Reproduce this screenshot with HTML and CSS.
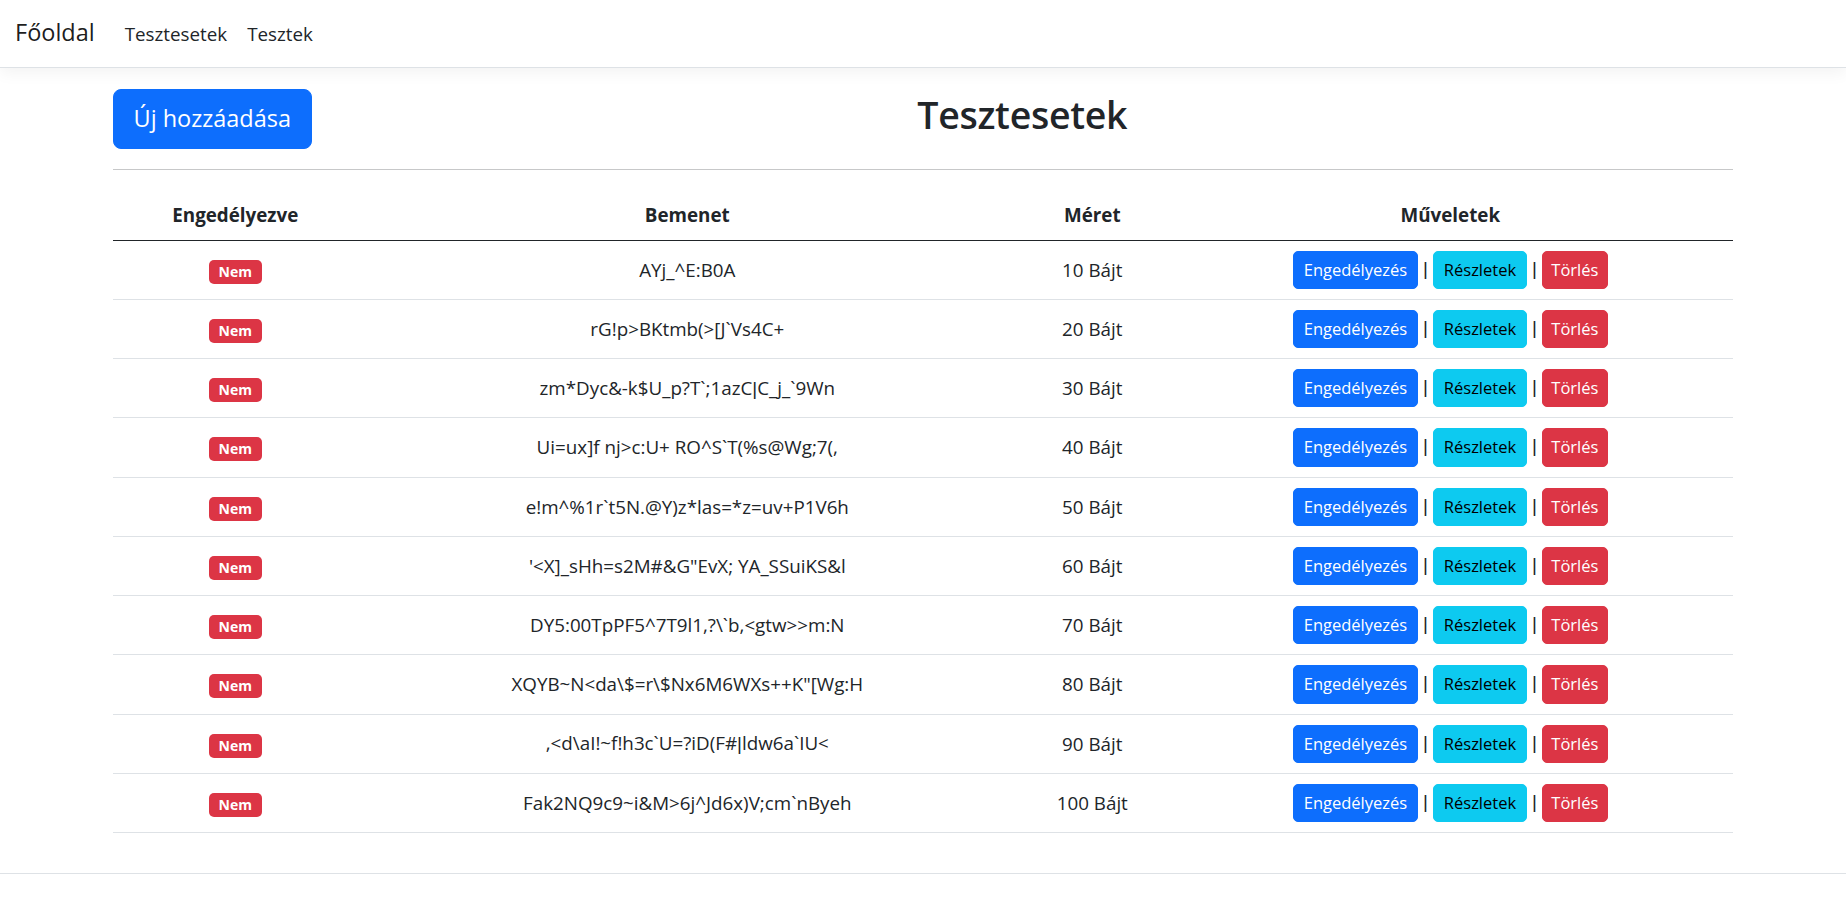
FILE: index.html
```html
<!DOCTYPE html>
<html lang="hu">
<head>
<meta charset="utf-8">
<title>Tesztesetek</title>
<link rel="stylesheet" href="styles.css">
</head>
<body>
<header class="navbar">
  <a class="brand" href="#">Főoldal</a>
  <nav class="nav">
    <a class="nav-link" href="#">Tesztesetek</a>
    <a class="nav-link" href="#">Tesztek</a>
  </nav>
</header>
<main class="container">
  <div class="title-row">
    <a class="btn btn-lg btn-primary" href="#">Új hozzáadása</a>
    <h1 class="title">Tesztesetek</h1>
  </div>
  <hr class="divider">
  <table class="table">
    <colgroup>
      <col class="c1"><col class="c2"><col class="c3"><col class="c4">
    </colgroup>
    <thead>
      <tr><th>Engedélyezve</th><th>Bemenet</th><th>Méret</th><th>Műveletek</th></tr>
    </thead>
    <tbody>
      <tr><td><span class="badge">Nem</span></td><td>AYj_^E:B0A</td><td>10 Bájt</td><td><a class="btn btn-sm btn-primary" href="#">Engedélyezés</a> <span class="sep">|</span> <a class="btn btn-sm btn-info" href="#">Részletek</a> <span class="sep">|</span> <a class="btn btn-sm btn-danger" href="#">Törlés</a></td></tr>
      <tr><td><span class="badge">Nem</span></td><td>rG!p&gt;BKtmb(&gt;[J`Vs4C+</td><td>20 Bájt</td><td><a class="btn btn-sm btn-primary" href="#">Engedélyezés</a> <span class="sep">|</span> <a class="btn btn-sm btn-info" href="#">Részletek</a> <span class="sep">|</span> <a class="btn btn-sm btn-danger" href="#">Törlés</a></td></tr>
      <tr><td><span class="badge">Nem</span></td><td>zm*Dyc&amp;-k$U_p?T`;1azC<span class="bar">|</span>C_j_`9Wn</td><td>30 Bájt</td><td><a class="btn btn-sm btn-primary" href="#">Engedélyezés</a> <span class="sep">|</span> <a class="btn btn-sm btn-info" href="#">Részletek</a> <span class="sep">|</span> <a class="btn btn-sm btn-danger" href="#">Törlés</a></td></tr>
      <tr><td><span class="badge">Nem</span></td><td>Ui=ux]f nj&gt;c:U+ RO^S`T(%s@Wg;7(,</td><td>40 Bájt</td><td><a class="btn btn-sm btn-primary" href="#">Engedélyezés</a> <span class="sep">|</span> <a class="btn btn-sm btn-info" href="#">Részletek</a> <span class="sep">|</span> <a class="btn btn-sm btn-danger" href="#">Törlés</a></td></tr>
      <tr><td><span class="badge">Nem</span></td><td>e!m^%1r`t5N.@Y)z*las=*z=uv+P1V6h</td><td>50 Bájt</td><td><a class="btn btn-sm btn-primary" href="#">Engedélyezés</a> <span class="sep">|</span> <a class="btn btn-sm btn-info" href="#">Részletek</a> <span class="sep">|</span> <a class="btn btn-sm btn-danger" href="#">Törlés</a></td></tr>
      <tr><td><span class="badge">Nem</span></td><td>'&lt;X]_sHh=s2M#&amp;G"EvX; YA_SSuiKS&amp;l</td><td>60 Bájt</td><td><a class="btn btn-sm btn-primary" href="#">Engedélyezés</a> <span class="sep">|</span> <a class="btn btn-sm btn-info" href="#">Részletek</a> <span class="sep">|</span> <a class="btn btn-sm btn-danger" href="#">Törlés</a></td></tr>
      <tr><td><span class="badge">Nem</span></td><td>DY5:00TpPF5^7T9l1,?\`b,&lt;gtw&gt;&gt;m:N</td><td>70 Bájt</td><td><a class="btn btn-sm btn-primary" href="#">Engedélyezés</a> <span class="sep">|</span> <a class="btn btn-sm btn-info" href="#">Részletek</a> <span class="sep">|</span> <a class="btn btn-sm btn-danger" href="#">Törlés</a></td></tr>
      <tr><td><span class="badge">Nem</span></td><td>XQYB~N&lt;da\$=r\$Nx6M6WXs++K"[Wg:H</td><td>80 Bájt</td><td><a class="btn btn-sm btn-primary" href="#">Engedélyezés</a> <span class="sep">|</span> <a class="btn btn-sm btn-info" href="#">Részletek</a> <span class="sep">|</span> <a class="btn btn-sm btn-danger" href="#">Törlés</a></td></tr>
      <tr><td><span class="badge">Nem</span></td><td>,&lt;d\aI!~f!h3c`U=?iD(F#<span class="bar">|</span>ldw6a`IU&lt;</td><td>90 Bájt</td><td><a class="btn btn-sm btn-primary" href="#">Engedélyezés</a> <span class="sep">|</span> <a class="btn btn-sm btn-info" href="#">Részletek</a> <span class="sep">|</span> <a class="btn btn-sm btn-danger" href="#">Törlés</a></td></tr>
      <tr><td><span class="badge">Nem</span></td><td>Fak2NQ9c9~i&amp;M&gt;6j^Jd6x)V;cm`nByeh</td><td>100 Bájt</td><td><a class="btn btn-sm btn-primary" href="#">Engedélyezés</a> <span class="sep">|</span> <a class="btn btn-sm btn-info" href="#">Részletek</a> <span class="sep">|</span> <a class="btn btn-sm btn-danger" href="#">Törlés</a></td></tr>
    </tbody>
  </table>
</main>
<footer class="footer"></footer>
</body>
</html>
```
FILE: styles.css
```css
* { box-sizing: border-box; }
html, body { margin: 0; padding: 0; }
body {
  font-family: "Open Sans", "Noto Sans", sans-serif;
  font-size: 18.8px;
  line-height: 30px;
  color: #212529;
  background: #fff;
}
a { text-decoration: none; }

.navbar {
  height: 68px;
  padding: 0 15px;
  display: flex;
  align-items: center;
  background: #fff;
  border-bottom: 1px solid #dee2e6;
  box-shadow: 0 5px 15px rgba(0, 0, 0, 0.05);
}
.brand {
  font-size: 23.5px;
  line-height: 37.5px;
  padding: 6px 0 7px;
  margin-right: 20px;
  color: rgba(0, 0, 0, 0.9);
}
.nav { display: flex; }
.nav-link {
  padding: 10px 10px;
  color: #212529;
  line-height: 30px;
}

.container {
  width: 1620px;
  margin: 21px auto 0;
  padding-bottom: 20px;
}
.title-row {
  display: flex;
  align-items: center;
}
.title {
  flex: 1;
  text-align: center;
  margin: 0 0 8px;
  font-size: 37.5px;
  font-weight: 600;
  letter-spacing: -0.3px;
  line-height: 1.2;
  color: #212529;
}

.btn {
  display: inline-block;
  border: 1px solid transparent;
  text-align: center;
  vertical-align: middle;
  white-space: nowrap;
}
.btn-lg {
  font-size: 23.5px;
  line-height: 37.5px;
  padding: 10px 19.5px;
  border-radius: 8px;
}
.btn-sm {
  font-size: 16.5px;
  line-height: 26.25px;
  padding: 5px 10px;
  border-radius: 5px;
}
.btn-danger.btn-sm { padding: 5px 8.5px; }
.btn-primary { background: #0d6efd; border-color: #0d6efd; color: #fff; }
.btn-info { background: #0dcaf0; border-color: #0dcaf0; color: #000; }
.btn-danger { background: #dc3545; border-color: #dc3545; color: #fff; }

.sep, .bar {
  font-family: "Liberation Sans", sans-serif;
}
.sep { color: #212529; }

.divider {
  margin: 20px 0;
  border: 0;
  border-top: 1px solid #212529;
  opacity: 0.25;
}

.table {
  width: 100%;
  border-collapse: collapse;
  table-layout: fixed;
  margin-bottom: 20px;
}
.c1 { width: 244.6px; }
.c2 { width: 659.4px; }
.c3 { width: 150.6px; }
.c4 { width: 565.4px; }
.table th, .table td {
  padding: 10px;
  text-align: center;
  vertical-align: middle;
  white-space: nowrap;
}
.table th {
  font-weight: 700;
  border-bottom: 1px solid #212529;
}
.table td {
  border-bottom: 1px solid #dee2e6;
}

.badge {
  display: inline-block;
  font-size: 14px;
  font-weight: 700;
  line-height: 1;
  color: #fff;
  background: #dc3545;
  padding: 5px 9.5px;
  border-radius: 5px;
  vertical-align: middle;
}

.footer {
  border-top: 1px solid #dee2e6;
  height: 60px;
}
```
